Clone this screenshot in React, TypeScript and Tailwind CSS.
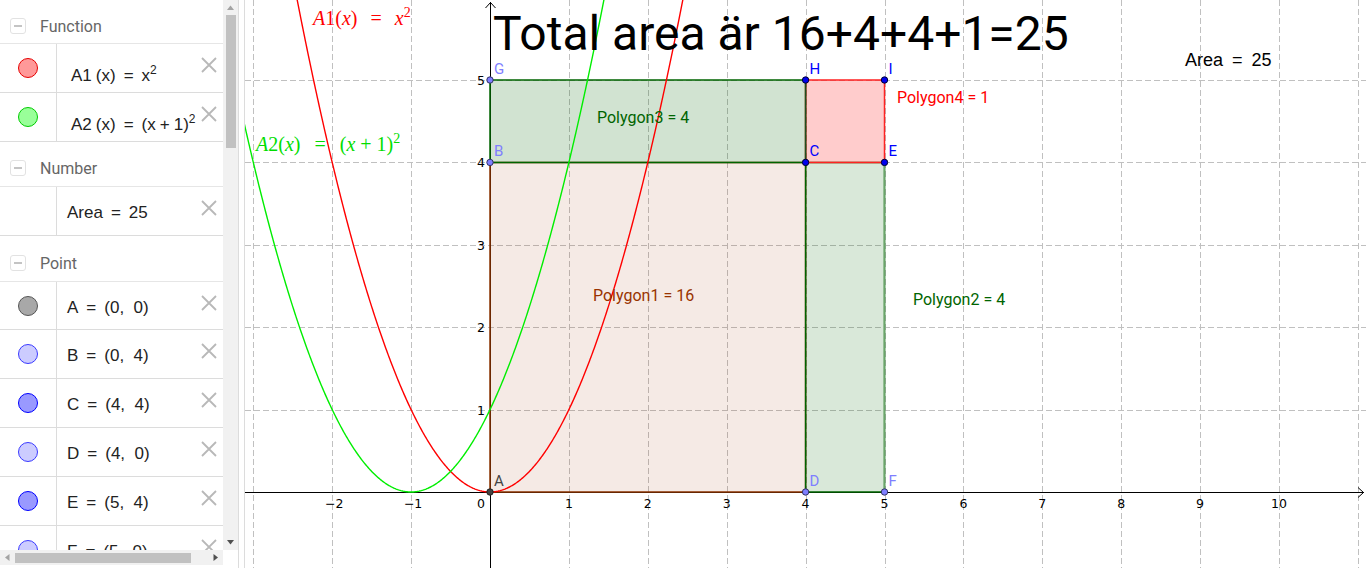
import React from "react";

const ox = 490;
const oy = 492;
const ux = 78.9;
const uy = 82.4;
const X = (x: number) => ox + x * ux;
const Y = (y: number) => oy - y * uy;
const px = (v: number) => Math.round(v) + 0.5;

function curvePath(f: (x: number) => number, x0: number, x1: number) {
  let d = "";
  for (let x = x0; x <= x1 + 1e-9; x += 0.01) {
    const sx = X(x);
    const sy = Y(f(x));
    d += (d ? " L" : "M") + sx.toFixed(2) + "," + sy.toFixed(2);
  }
  return d;
}

function XIcon() {
  return (
    <svg width="16" height="16" viewBox="0 0 16 16" className="block">
      <path d="M1 1L15 15M15 1L1 15" stroke="#b8b8b8" strokeWidth="1.8" fill="none" />
    </svg>
  );
}

function Header({ label, h }: { label: string; h: string }) {
  return (
    <div className={`flex items-center border-b border-[#e6e6e6] pl-[10px] pt-[8px] ${h}`}>
      <div className="flex h-[16px] w-[16px] items-center justify-center rounded-[3px] border border-[#e2e2e2]">
        <div className="h-[2px] w-[8px] bg-[#c4c4c4]" />
      </div>
      <span className="ml-[14px] pt-[2px] font-['Roboto',sans-serif] text-[16px] text-[#666666]">{label}</span>
    </div>
  );
}

function Row({
  h,
  circle,
  children,
  fn,
}: {
  h: string;
  circle?: string;
  children: React.ReactNode;
  fn?: boolean;
}) {
  return (
    <div className={`flex border-b border-[#dcdcdc] ${h}`}>
      <div className="flex w-[57px] shrink-0 items-center justify-center border-r border-[#dcdcdc]">
        {circle && <div className={`h-[20px] w-[20px] rounded-full border ${circle}`} />}
      </div>
      <div
        className={`flex min-w-0 flex-1 items-center whitespace-nowrap font-['Liberation_Sans',sans-serif] text-[17px] text-[#222222] ${
          fn ? "pl-[14px] pt-[16px]" : "pl-[10px] pt-[4px]"
        }`}
      >
        {children}
      </div>
      <div className="mr-[6px] mt-[13px] shrink-0">
        <XIcon />
      </div>
    </div>
  );
}

const Eq = () => <span className="mx-[8px]">=</span>;

function LeftPanel() {
  return (
    <div className="flex h-[568px] w-[238px] shrink-0 flex-col bg-white">
      <div className="flex h-[550px]">
        <div className="w-[223px] overflow-hidden">
          <Header label="Function" h="h-[44px]" />
          <Row h="h-[49px]" circle="bg-[#ff9999] border-[#e60000]" fn>
            A1<span className="ml-[4px]">(x)</span>
            <Eq />x<sup className="text-[12px]">2</sup>
          </Row>
          <Row h="h-[49px]" circle="bg-[#99ff99] border-[#00cc00]" fn>
            A2<span className="ml-[4px]">(x)</span>
            <Eq />
            (x<span className="mx-[4px]">+</span>1)<sup className="text-[12px]">2</sup>
          </Row>
          <Header label="Number" h="h-[45px]" />
          <Row h="h-[49px]">
            Area
            <Eq />
            25
          </Row>
          <Header label="Point" h="h-[46px]" />
          <Row h="h-[48px]" circle="bg-[#a8a8a8] border-[#555555]">
            A<Eq />(0,&nbsp;&nbsp;0)
          </Row>
          <Row h="h-[49px]" circle="bg-[#ccccff] border-[#3a3aff]">
            B<Eq />(0,&nbsp;&nbsp;4)
          </Row>
          <Row h="h-[49px]" circle="bg-[#9999ff] border-[#0000ff]">
            C<Eq />(4,&nbsp;&nbsp;4)
          </Row>
          <Row h="h-[49px]" circle="bg-[#ccccff] border-[#3a3aff]">
            D<Eq />(4,&nbsp;&nbsp;0)
          </Row>
          <Row h="h-[49px]" circle="bg-[#9999ff] border-[#0000ff]">
            E<Eq />(5,&nbsp;&nbsp;4)
          </Row>
          <Row h="h-[49px]" circle="bg-[#ccccff] border-[#3a3aff]">
            F<Eq />(5,&nbsp;&nbsp;0)
          </Row>
        </div>
        <div className="flex w-[15px] flex-col items-center bg-[#f1f1f1]">
          <svg width="9" height="15" viewBox="0 0 9 15" className="block">
            <path d="M1 10L4.5 5.5L8 10Z" fill="#a3a3a3" />
          </svg>
          <div className="h-[133px] w-[10px] bg-[#c1c1c1]" />
          <div className="flex-1" />
          <svg width="9" height="15" viewBox="0 0 9 15" className="block">
            <path d="M1 5L4.5 9.5L8 5Z" fill="#505050" />
          </svg>
        </div>
      </div>
      <div className="flex h-[15px]">
        <div className="flex w-[223px] items-center bg-[#f1f1f1]">
          <svg width="15" height="15" viewBox="0 0 15 15" className="block">
            <path d="M9.5 4L5 7.5L9.5 11Z" fill="#a3a3a3" />
          </svg>
          <div className="h-[10px] w-[176px] bg-[#c1c1c1]" />
          <div className="flex-1" />
          <svg width="15" height="15" viewBox="0 0 15 15" className="block">
            <path d="M5.5 4L10 7.5L5.5 11Z" fill="#505050" />
          </svg>
        </div>
        <div className="flex-1 bg-white" />
      </div>
    </div>
  );
}

type Pt = { n: string; x: number; y: number; fill: string; stroke: string; lc: string };

function Graph() {
  const vx: number[] = [];
  for (let i = -3; i <= 11; i++) if (i !== 0) vx.push(i);
  const hy = [1, 2, 3, 4, 5];
  const axisFont = "'DejaVu Sans', sans-serif";
  const roboto = "Roboto, 'Liberation Sans', sans-serif";
  const serif = "'Liberation Serif', serif";

  const poly = (pts: [number, number][]) => pts.map(([a, b]) => `${X(a).toFixed(1)},${Y(b).toFixed(1)}`).join(" ");

  const points: Pt[] = [
    { n: "A", x: 0, y: 0, fill: "#444444", stroke: "#222222", lc: "#444444" },
    { n: "B", x: 0, y: 4, fill: "#7f7fff", stroke: "#333366", lc: "#7f7fff" },
    { n: "C", x: 4, y: 4, fill: "#0000ee", stroke: "#000033", lc: "#0000ff" },
    { n: "D", x: 4, y: 0, fill: "#7f7fff", stroke: "#333366", lc: "#7f7fff" },
    { n: "E", x: 5, y: 4, fill: "#0000ee", stroke: "#000033", lc: "#0000ff" },
    { n: "F", x: 5, y: 0, fill: "#7f7fff", stroke: "#333366", lc: "#7f7fff" },
    { n: "G", x: 0, y: 5, fill: "#7f7fff", stroke: "#333366", lc: "#7f7fff" },
    { n: "H", x: 4, y: 5, fill: "#0000ee", stroke: "#000033", lc: "#0000ff" },
    { n: "I", x: 5, y: 5, fill: "#0000ee", stroke: "#000033", lc: "#0000ff" },
  ];

  return (
    <svg width="1121" height="568" viewBox="245 0 1121 568" className="block">
      <rect x="245" y="0" width="1121" height="568" fill="#ffffff" />
      {/* grid */}
      {vx.map((i) => (
        <line key={"v" + i} x1={px(X(i))} y1={0} x2={px(X(i))} y2={568} stroke="#c0c0c0" strokeWidth="1" strokeDasharray="6 3" />
      ))}
      {hy.map((j) => (
        <line key={"h" + j} x1={245} y1={px(Y(j))} x2={1366} y2={px(Y(j))} stroke="#c0c0c0" strokeWidth="1" strokeDasharray="6 3" />
      ))}
      {/* axes */}
      <line x1={245} y1={492.5} x2={1364} y2={492.5} stroke="#000" strokeWidth="1" />
      <line x1={490.5} y1={2} x2={490.5} y2={568} stroke="#000" strokeWidth="1" />
      <path d="M1358 487.5L1363.5 492.5L1358 497.5" fill="none" stroke="#000" strokeWidth="1" />
      <path d="M485.5 8L490.5 2.5L495.5 8" fill="none" stroke="#000" strokeWidth="1" />
      {/* axis labels */}
      {[-2, -1, 1, 2, 3, 4, 5, 6, 7, 8, 9, 10].map((i) => (
        <text key={"xl" + i} x={X(i) + (i < 0 ? 2 : 0)} y={508} fontFamily={axisFont} fontSize="12.5" textAnchor="middle" fill="#000">
          {i < 0 ? "\u2212" + Math.abs(i) : String(i)}
        </text>
      ))}
      <text x={481} y={508} fontFamily={axisFont} fontSize="12.5" textAnchor="middle" fill="#000">
        0
      </text>
      {hy.map((j) => (
        <text key={"yl" + j} x={485} y={Y(j) + 5} fontFamily={axisFont} fontSize="12.5" textAnchor="end" fill="#000">
          {j}
        </text>
      ))}
      {/* polygons */}
      <polygon points={poly([[0, 0], [0, 4], [4, 4], [4, 0]])} fill="#993300" fillOpacity="0.1" stroke="#8a3300" strokeWidth="1.5" />
      <polygon points={poly([[0, 4], [0, 5], [4, 5], [4, 4]])} fill="#006400" fillOpacity="0.18" stroke="#006400" strokeWidth="1.5" />
      <polygon points={poly([[4, 0], [4, 4], [5, 4], [5, 0]])} fill="#006400" fillOpacity="0.15" stroke="#006400" strokeWidth="1.5" />
      <line x1={X(5)} y1={Y(4)} x2={X(5)} y2={Y(0)} stroke="#6aa56a" strokeWidth="1.5" />
      <polygon points={poly([[4, 4], [4, 5], [5, 5], [5, 4]])} fill="#ff0000" fillOpacity="0.2" stroke="#ff2222" strokeWidth="1.5" />
      <line x1={X(4)} y1={Y(4)} x2={X(4)} y2={Y(5)} stroke="#1f4f1f" strokeWidth="1.5" />
      {/* curves */}
      <path d={curvePath((x) => x * x, -2.6, 2.6)} fill="none" stroke="#ff0000" strokeWidth="1.4" />
      <path d={curvePath((x) => (x + 1) * (x + 1), -3.6, 1.6)} fill="none" stroke="#00ee00" strokeWidth="1.4" />
      {/* polygon labels */}
      <text x={597} y={123} fontFamily={roboto} fontSize="16" fill="#006400">
        Polygon3 = 4
      </text>
      <text x={897} y={103} fontFamily={roboto} fontSize="16" fill="#ff0000">
        Polygon4 = 1
      </text>
      <text x={593} y={301} fontFamily={roboto} fontSize="16" fill="#993300">
        Polygon1 = 16
      </text>
      <text x={913} y={305} fontFamily={roboto} fontSize="16" fill="#006400">
        Polygon2 = 4
      </text>
      {/* points */}
      {points.map((p) => (
        <g key={p.n}>
          <circle cx={X(p.x)} cy={Y(p.y)} r="3.2" fill={p.fill} stroke={p.stroke} strokeWidth="1" />
          <text x={X(p.x) + 4} y={Y(p.y) - 6} fontFamily={roboto} fontSize="15" fill={p.lc}>
            {p.n}
          </text>
        </g>
      ))}
      {/* function labels */}
      <text x={313} y={25} fontFamily={serif} fontSize="20" fill="#ff0000">
        <tspan fontStyle="italic">A</tspan>1(<tspan fontStyle="italic">x</tspan>)<tspan dx="13">=</tspan>
        <tspan dx="13" fontStyle="italic">x</tspan>
        <tspan dy="-8" fontSize="14">2</tspan>
      </text>
      <text x={256} y={151} fontFamily={serif} fontSize="20" fill="#00dd00">
        <tspan fontStyle="italic">A</tspan>2(<tspan fontStyle="italic">x</tspan>)<tspan dx="14">=</tspan>
        <tspan dx="14">(</tspan>
        <tspan fontStyle="italic">x</tspan>
        <tspan dx="5">+</tspan>
        <tspan dx="5">1)</tspan>
        <tspan dy="-8" fontSize="14">2</tspan>
      </text>
      {/* title */}
      <text x={493} y={50} fontFamily={roboto} fontSize="48" fill="#000">
        Total area är 16+4+4+1=25
      </text>
      <text x={1185} y={66} fontFamily="'Liberation Sans', sans-serif" fontSize="18" fill="#000">
        Area<tspan dx="9">=</tspan>
        <tspan dx="9">25</tspan>
      </text>
    </svg>
  );
}

export default function App() {
  return (
    <div className="flex h-[568px] w-[1366px] overflow-hidden bg-white">
      <LeftPanel />
      <div className="h-[568px] w-[7px] shrink-0 border-l border-r border-[#dcdcdc] bg-white" />
      <div className="h-[568px] flex-1 overflow-hidden">
        <Graph />
      </div>
    </div>
  );
}
